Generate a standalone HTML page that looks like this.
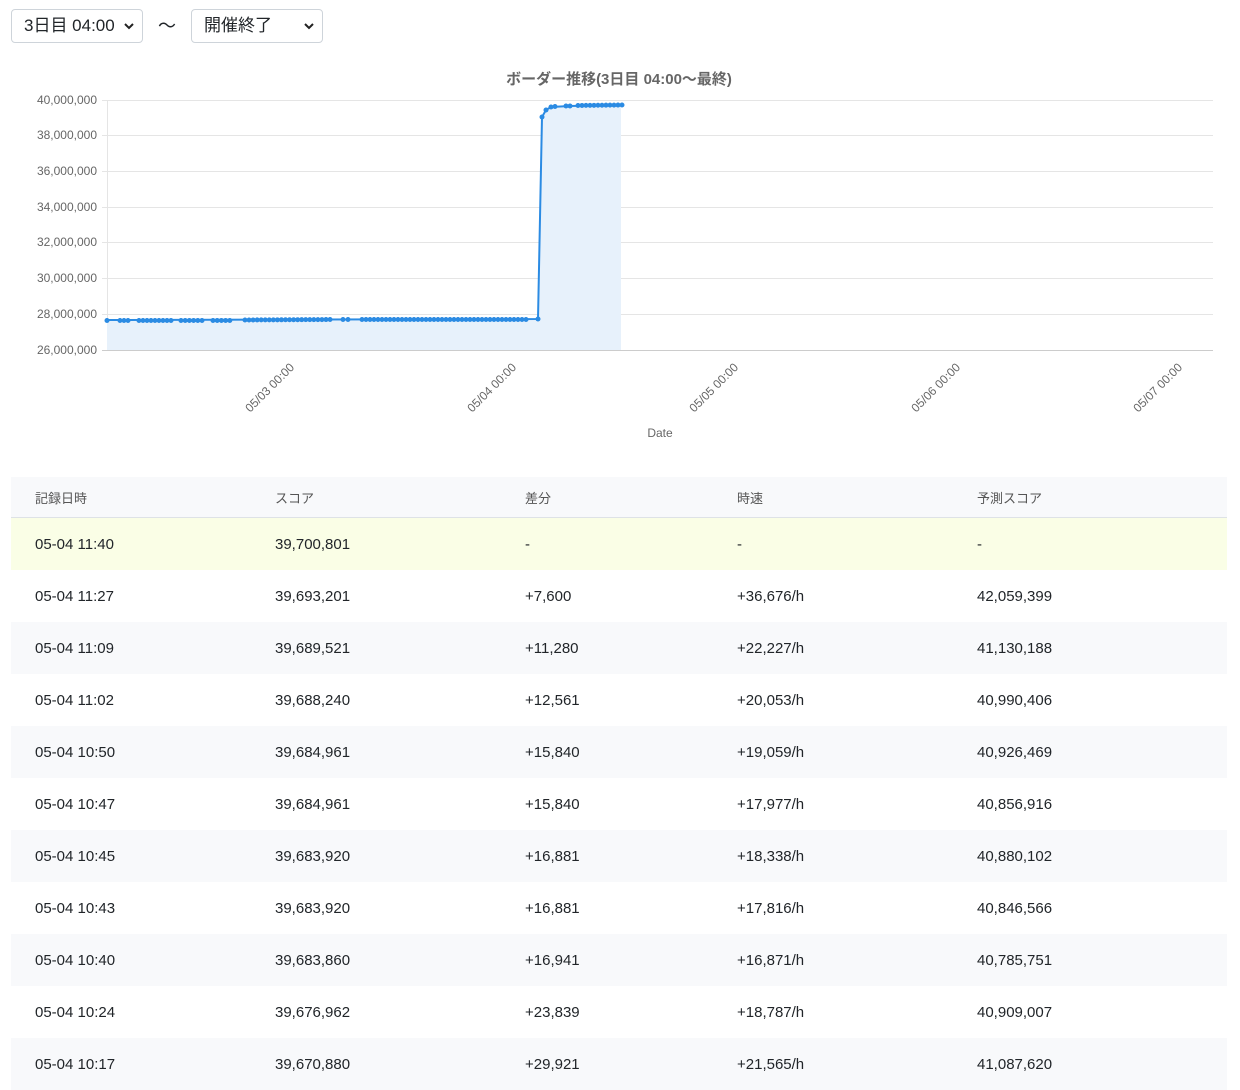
<!DOCTYPE html>
<html><head><meta charset="utf-8"><style>
body{margin:0;background:#fff;font-family:"Liberation Sans","Noto Sans CJK JP",sans-serif;color:#212529;width:1240px;height:1080px;overflow:hidden;position:relative}
.sel{position:absolute;top:9px;height:34px;border:1px solid #ced4da;border-radius:4px;box-sizing:border-box;font-size:17px;line-height:32px;padding-left:12px;background:#fff}
.sel svg{position:absolute;right:8px;top:12px}
table{position:absolute;left:11px;top:477px;width:1216px;border-collapse:collapse;font-size:15px}
th{height:40px;background:#f8f9fb;color:#555;font-weight:normal;font-size:13px;text-align:left;border-bottom:1px solid #dee2e6;padding:0}
td{height:52px;padding:0}
tr.a td{background:#f8f9fb}
tr.y td{background:#fafee6}
th:first-child,td:first-child{padding-left:24px;width:240px}
th:nth-child(2),td:nth-child(2){width:250px}
th:nth-child(3),td:nth-child(3){width:212px}
th:nth-child(4),td:nth-child(4){width:240px}
</style></head><body>
<div class="sel" style="left:11px;width:132px">3日目 04:00<svg width="10" height="8" viewBox="0 0 10 8"><path d="M1 2l4 4 4-4" stroke="#222" stroke-width="2" fill="none"/></svg></div>
<div style="position:absolute;left:158px;top:12px;font-size:18px">〜</div>
<div class="sel" style="left:191px;width:132px">開催終了<svg width="10" height="8" viewBox="0 0 10 8"><path d="M1 2l4 4 4-4" stroke="#222" stroke-width="2" fill="none"/></svg></div>
<svg style="position:absolute;left:0;top:0" width="1240" height="460">
<text x="619" y="84" text-anchor="middle" font-size="15" font-weight="bold" fill="#666" font-family="Liberation Sans,Noto Sans CJK JP,sans-serif">ボーダー推移(3日目 04:00〜最終)</text>
<g stroke="#e5e5e5" stroke-width="1">
<line x1="102" y1="100.5" x2="1213" y2="100.5"/><line x1="102" y1="135.5" x2="1213" y2="135.5"/><line x1="102" y1="171.5" x2="1213" y2="171.5"/><line x1="102" y1="207.5" x2="1213" y2="207.5"/><line x1="102" y1="242.5" x2="1213" y2="242.5"/><line x1="102" y1="278.5" x2="1213" y2="278.5"/><line x1="102" y1="314.5" x2="1213" y2="314.5"/>
<line x1="107.5" y1="100" x2="107.5" y2="350"/>
</g>
<line x1="102" y1="350.5" x2="1213" y2="350.5" stroke="#ccc"/>
<g font-size="12" fill="#666" text-anchor="end" font-family="Liberation Sans,sans-serif">
<text x="97" y="104">40,000,000</text><text x="97" y="139">38,000,000</text><text x="97" y="175">36,000,000</text><text x="97" y="211">34,000,000</text><text x="97" y="246">32,000,000</text><text x="97" y="282">30,000,000</text><text x="97" y="318">28,000,000</text><text x="97" y="354">26,000,000</text>
</g>
<path d="M107 320 L538 319 L542 117 L546 110 L551 107 L570 106 L621 105 L621 350 L107 350Z" fill="#e7f1fb"/>
<path d="M107 320 L538 319 L542 117 L546 110 L551 107 L570 106 L621 105" fill="none" stroke="#2b8be3" stroke-width="2"/>
<g stroke="#2b8be3" stroke-width="5" stroke-linecap="round" fill="none">
<line x1="120" y1="320.5" x2="132" y2="320.5" stroke-dasharray="0 4"/>
<line x1="139" y1="320.5" x2="175" y2="320.5" stroke-dasharray="0 4"/>
<line x1="181" y1="320.5" x2="202" y2="320.5" stroke-dasharray="0 4.2"/>
<line x1="213" y1="320.5" x2="230" y2="320.5" stroke-dasharray="0 4.2"/>
<line x1="245" y1="320" x2="334" y2="319.5" stroke-dasharray="0 4.05"/>
<line x1="343" y1="319.5" x2="353" y2="319.5" stroke-dasharray="0 5"/>
<line x1="362" y1="319.5" x2="530" y2="319.5" stroke-dasharray="0 4"/>
<line x1="578" y1="105.5" x2="622" y2="105" stroke-dasharray="0 4"/>
</g>
<g fill="#2b8be3"><circle cx="107" cy="320.5" r="2.5"/><circle cx="538" cy="319" r="2.5"/><circle cx="542" cy="117" r="2.5"/><circle cx="546" cy="110" r="2.5"/><circle cx="551" cy="107" r="2.5"/><circle cx="555" cy="106.5" r="2.5"/><circle cx="566" cy="106" r="2.5"/><circle cx="570" cy="106" r="2.5"/></g>
<g font-size="12" fill="#666" font-family="Liberation Sans,sans-serif" text-anchor="end">
<text transform="translate(295,368) rotate(-45)">05/03 00:00</text>
<text transform="translate(517,368) rotate(-45)">05/04 00:00</text>
<text transform="translate(739,368) rotate(-45)">05/05 00:00</text>
<text transform="translate(961,368) rotate(-45)">05/06 00:00</text>
<text transform="translate(1183,368) rotate(-45)">05/07 00:00</text>
</g>
<text x="660" y="437" font-size="12" fill="#666" text-anchor="middle" font-family="Liberation Sans,sans-serif">Date</text>
</svg>
<table>
<tr><th>記録日時</th><th>スコア</th><th>差分</th><th>時速</th><th>予測スコア</th></tr>
<tr class="y"><td>05-04 11:40</td><td>39,700,801</td><td>-</td><td>-</td><td>-</td></tr>
<tr><td>05-04 11:27</td><td>39,693,201</td><td>+7,600</td><td>+36,676/h</td><td>42,059,399</td></tr>
<tr class="a"><td>05-04 11:09</td><td>39,689,521</td><td>+11,280</td><td>+22,227/h</td><td>41,130,188</td></tr>
<tr><td>05-04 11:02</td><td>39,688,240</td><td>+12,561</td><td>+20,053/h</td><td>40,990,406</td></tr>
<tr class="a"><td>05-04 10:50</td><td>39,684,961</td><td>+15,840</td><td>+19,059/h</td><td>40,926,469</td></tr>
<tr><td>05-04 10:47</td><td>39,684,961</td><td>+15,840</td><td>+17,977/h</td><td>40,856,916</td></tr>
<tr class="a"><td>05-04 10:45</td><td>39,683,920</td><td>+16,881</td><td>+18,338/h</td><td>40,880,102</td></tr>
<tr><td>05-04 10:43</td><td>39,683,920</td><td>+16,881</td><td>+17,816/h</td><td>40,846,566</td></tr>
<tr class="a"><td>05-04 10:40</td><td>39,683,860</td><td>+16,941</td><td>+16,871/h</td><td>40,785,751</td></tr>
<tr><td>05-04 10:24</td><td>39,676,962</td><td>+23,839</td><td>+18,787/h</td><td>40,909,007</td></tr>
<tr class="a"><td>05-04 10:17</td><td>39,670,880</td><td>+29,921</td><td>+21,565/h</td><td>41,087,620</td></tr>
</table>
</body></html>
